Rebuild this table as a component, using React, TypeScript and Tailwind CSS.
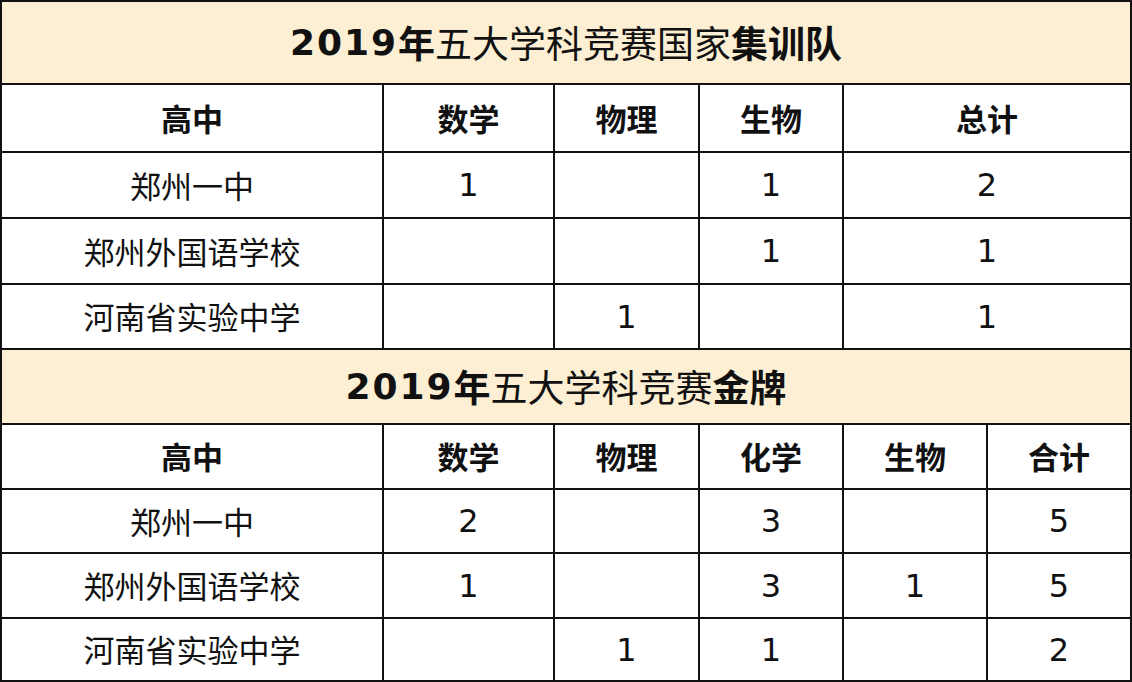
import { Fragment } from 'react';

type Row = { name: string; values: string[] };

const TEAM_HEAD = ['数学', '物理', '生物', '总计'];
const TEAM_ROWS: Row[] = [
  { name: '郑州一中', values: ['1', '', '1', '2'] },
  { name: '郑州外国语学校', values: ['', '', '1', '1'] },
  { name: '河南省实验中学', values: ['', '1', '', '1'] },
];

const GOLD_HEAD = ['数学', '物理', '化学', '生物', '合计'];
const GOLD_ROWS: Row[] = [
  { name: '郑州一中', values: ['2', '', '3', '', '5'] },
  { name: '郑州外国语学校', values: ['1', '', '3', '1', '5'] },
  { name: '河南省实验中学', values: ['', '1', '1', '', '2'] },
];

function Title({ rest, bold, height }: { rest: string; bold: string; height: string }) {
  return (
    <div className={`flex items-center justify-center bg-[#fcefd3] font-['Noto_Sans_CJK_SC',sans-serif] text-[37px] text-[#111] ${height}`}>
      <span className="font-['DejaVu_Sans',sans-serif] text-[36px] font-bold tracking-[2px]">2019</span>
      <span className="font-bold">年</span>
      <span>{rest}</span>
      <span className="font-bold">{bold}</span>
    </div>
  );
}

function Cell({ children, head }: { children?: string; head?: boolean }) {
  const isNum = children !== undefined && /^\d+$/.test(children);
  const font = isNum
    ? "font-['DejaVu_Sans',sans-serif] text-[32px]"
    : head
      ? "font-['Noto_Sans_CJK_SC',sans-serif] text-[31px] font-bold"
      : "font-['Noto_Sans_CJK_SC',sans-serif] text-[31px]";
  return <div className={`flex items-center justify-center bg-white text-[#111] ${font}`}>{children}</div>;
}

function Table({ cols, rows, head, data }: { cols: string; rows: string; head: string[]; data: Row[] }) {
  return (
    <div className={`grid gap-[2px] ${cols} ${rows}`}>
      <Cell head>高中</Cell>
      {head.map((h) => (
        <Cell key={h} head>{h}</Cell>
      ))}
      {data.map((r) => (
        <Fragment key={r.name}>
          <Cell>{r.name}</Cell>
          {r.values.map((v, i) => (
            <Cell key={i}>{v}</Cell>
          ))}
        </Fragment>
      ))}
    </div>
  );
}

export default function App() {
  return (
    <div className="flex h-[682px] w-[1132px] flex-col gap-[2px] bg-[#111] p-[2px]">
      <Title rest="五大学科竞赛国家" bold="集训队" height="h-[81px]" />
      <Table
        cols="grid-cols-[380px_169px_143px_142px_286px]"
        rows="grid-rows-[66px_64px_64px_63px]"
        head={TEAM_HEAD}
        data={TEAM_ROWS}
      />
      <Title rest="五大学科竞赛" bold="金牌" height="h-[73px]" />
      <Table
        cols="grid-cols-[380px_169px_143px_142px_142px_142px]"
        rows="grid-rows-[63px_62px_63px_61px]"
        head={GOLD_HEAD}
        data={GOLD_ROWS}
      />
    </div>
  );
}
